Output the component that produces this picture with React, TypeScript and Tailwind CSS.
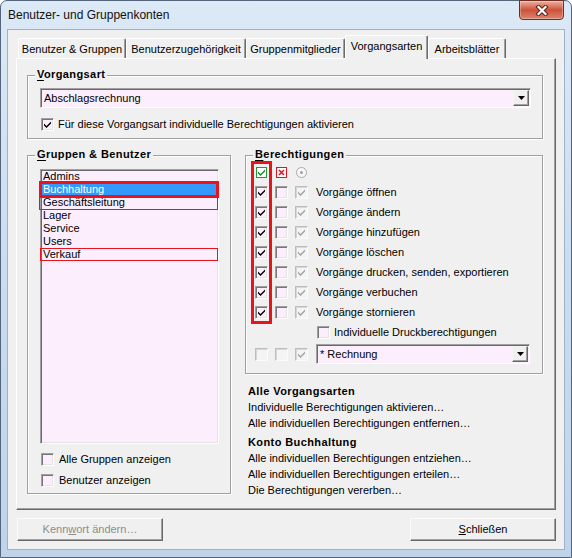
import React from "react";

const FONT = "font-['Liberation_Sans',Arial,sans-serif]";

function Check({ color = "#000" }: { color?: string }) {
  return (
    <svg width="7" height="7" viewBox="0 0 7 7" className="block">
      <polygon points="0,2.5 2.5,5 7,0.5 7,2.5 2.5,7 0,4.5" fill={color} />
    </svg>
  );
}

type Kind = "pink" | "disabled";

function Box({ checked = false, kind = "pink" }: { checked?: boolean; kind?: Kind }) {
  const cls =
    kind === "pink"
      ? "bg-[#fdeefd] border-t-[#a0a0a0] border-l-[#a0a0a0] border-r-white border-b-white shadow-[inset_1px_1px_0_#767676,inset_-1px_-1px_0_#e3e3e3]"
      : "bg-[#f4f4f4] border-t-[#bdbdbd] border-l-[#bdbdbd] border-r-[#fbfbfb] border-b-[#fbfbfb] shadow-[inset_1px_1px_0_#d6d6d6]";
  return (
    <div className={`w-[13px] h-[13px] shrink-0 border flex items-center justify-center ${cls}`}>
      {checked && <Check color={kind === "pink" ? "#000" : "#a3a3a3"} />}
    </div>
  );
}

function DropButton() {
  return (
    <div className="w-[16px] h-[16px] mr-px shrink-0 bg-[#f0f0f0] border border-t-[#f4f4f4] border-l-[#f4f4f4] border-r-[#696969] border-b-[#696969] shadow-[inset_-1px_-1px_0_#a0a0a0] flex items-center justify-center">
      <svg width="7" height="4" viewBox="0 0 7 4" className="block">
        <polygon points="0,0 7,0 3.5,4" fill="#000" />
      </svg>
    </div>
  );
}

function Combo({ text, className }: { text: string; className: string }) {
  return (
    <div
      className={`flex items-center border border-t-[#a0a0a0] border-l-[#a0a0a0] border-r-white border-b-white shadow-[inset_1px_1px_0_#696969] bg-[#fdeefd] ${className}`}
    >
      <div className="flex-1 pl-[3px] whitespace-nowrap">{text}</div>
      <DropButton />
    </div>
  );
}

function Group({
  title,
  className,
  children,
}: {
  title: string;
  className: string;
  children?: React.ReactNode;
}) {
  return (
    <div
      className={`relative border border-[#a0a0a0] shadow-[inset_1px_1px_0_#ffffff,1px_1px_0_#ffffff] ${className}`}
    >
      <div className="absolute -top-[8px] left-[7px] px-[2px] bg-[#f0f0f0] font-bold tracking-[0.4px] whitespace-nowrap">
        <span className="underline underline-offset-[2px]">{title[0]}</span>
        {title.slice(1)}
      </div>
      {children}
    </div>
  );
}

function Button({ children, disabled = false }: { children: React.ReactNode; disabled?: boolean }) {
  return (
    <div
      className={`w-[146px] h-[23px] flex items-center justify-center border border-t-[#fbfbfb] border-l-[#fbfbfb] border-r-[#696969] border-b-[#696969] shadow-[inset_-1px_-1px_0_#a0a0a0] ${
        disabled ? "text-[#8d8d8d]" : "text-black"
      }`}
    >
      {children}
    </div>
  );
}

const tabs = [
  { label: "Benutzer & Gruppen", w: "w-[108px]", sel: false },
  { label: "Benutzerzugehörigkeit", w: "w-[120px]", sel: false },
  { label: "Gruppenmitglieder", w: "w-[99px]", sel: false },
  { label: "Vorgangsarten", w: "w-[83px]", sel: true },
  { label: "Arbeitsblätter", w: "w-[78px]", sel: false },
];

const listItems = ["Admins", "Buchhaltung", "Geschäftsleitung", "Lager", "Service", "Users", "Verkauf"];

const perms = [
  "Vorgänge öffnen",
  "Vorgänge ändern",
  "Vorgänge hinzufügen",
  "Vorgänge löschen",
  "Vorgänge drucken, senden, exportieren",
  "Vorgänge verbuchen",
  "Vorgänge stornieren",
];

function ListItem({ name }: { name: string }) {
  const selected = name === "Buchhaltung";
  return (
    <div
      className={`relative h-[13px] pl-px whitespace-nowrap ${
        selected ? "bg-[#3399ff] text-white" : "text-black"
      }`}
    >
      {name}
      {selected && (
        <div className="absolute -left-[3px] -right-[3px] -top-[2px] -bottom-[2px] border-[3px] border-[#e8131b]" />
      )}
      {name === "Geschäftsleitung" && (
        <div className="absolute -left-[3px] -right-[2px] top-0 -bottom-[1px] border border-[#e8131b]" />
      )}
      {name === "Verkauf" && (
        <div className="absolute -left-[2px] -right-[2px] top-0 bottom-0 border border-[#e8131b]" />
      )}
    </div>
  );
}

export default function App() {
  return (
    <div className={`w-[572px] h-[558px] bg-white ${FONT} text-[11px] leading-[13px] text-black`}>
      <div className="w-full h-full rounded-t-[7px] border border-[#55667c] bg-linear-to-b from-[#dce9f6] via-[#c9dcf0] to-[#bfd4eb] flex flex-col">
        {/* Title bar */}
        <div className="h-[28px] flex items-start justify-between">
          <div className="pl-[7px] h-full flex items-center text-[12px] text-[#111]">
            Benutzer- und Gruppenkonten
          </div>
          <div className="-mt-px mr-[7px] w-[45px] h-[20px] rounded-b-[4px] border border-[#6e2d22] bg-linear-to-b from-[#eab0a2] via-[#cc5138] to-[#dc846f] shadow-[inset_0_0_0_1px_rgba(255,255,255,0.3)] flex items-center justify-center">
            <svg width="14" height="11" viewBox="0 0 14 11" className="block">
              <path d="M3.5 2 L10.5 9 M10.5 2 L3.5 9" stroke="#5a2318" strokeWidth="4.2" strokeLinecap="square" />
              <path d="M3.5 2 L10.5 9 M10.5 2 L3.5 9" stroke="#ffffff" strokeWidth="2.2" strokeLinecap="square" />
            </svg>
          </div>
        </div>

        {/* Client area */}
        <div className="mx-[6px] h-[521px] border border-[#9db2ca] bg-[#f0f0f0] flex flex-col">
          {/* Tabs */}
          <div className="mt-[5px] ml-[10px] h-[23px] flex items-end">
            {tabs.map((t) =>
              t.sel ? (
                <div
                  key={t.label}
                  className={`${t.w} h-[24px] -mb-px relative z-10 bg-[#f0f0f0] rounded-t-[2px] border-t border-l border-r border-t-white border-l-white border-r-[#696969] shadow-[inset_-1px_0_0_#a0a0a0] flex items-center justify-center whitespace-nowrap pb-[2px]`}
                >
                  {t.label}
                </div>
              ) : (
                <div
                  key={t.label}
                  className={`${t.w} h-[20px] rounded-t-[2px] border-t border-l border-r border-t-white border-l-white border-r-[#696969] shadow-[inset_-1px_0_0_#a0a0a0] flex items-center justify-center whitespace-nowrap pt-px`}
                >
                  {t.label}
                </div>
              )
            )}
          </div>

          {/* Tab panel */}
          <div className="ml-[8px] w-[540px] h-[452px] border border-t-white border-l-white border-r-[#696969] border-b-[#696969] shadow-[inset_-1px_-1px_0_#a0a0a0] flex flex-col">
            <Group title="Vorgangsart" className="ml-[10px] mt-[16px] w-[516px] h-[64px] flex flex-col">
              <Combo text="Abschlagsrechnung" className="ml-[12px] mt-[12px] w-[491px] h-[20px]" />
              <div className="mt-[10px] ml-[13px] flex items-center gap-[4px]">
                <Box checked />
                <span className="whitespace-nowrap">Für diese Vorgangsart individuelle Berechtigungen aktivieren</span>
              </div>
            </Group>

            <div className="mt-[16px] ml-[10px] flex items-start">
              <Group title="Gruppen & Benutzer" className="w-[204px] h-[339px] flex flex-col">
                <div className="ml-[12px] mt-[13px] w-[179px] h-[275px] border border-t-[#a0a0a0] border-l-[#a0a0a0] border-r-white border-b-white shadow-[inset_1px_1px_0_#696969,inset_-1px_-1px_0_#e3e3e3] bg-[#fdeefd] pl-px pr-[2px] flex flex-col">
                  {listItems.map((n) => (
                    <ListItem key={n} name={n} />
                  ))}
                </div>
                <div className="mt-[9px] ml-[13px] flex items-center gap-[5px]">
                  <Box />
                  <span>Alle Gruppen anzeigen</span>
                </div>
                <div className="mt-[8px] ml-[13px] flex items-center gap-[5px]">
                  <Box />
                  <span>Benutzer anzeigen</span>
                </div>
              </Group>

              <div className="ml-[14px] w-[298px] flex flex-col">
                <Group title="Berechtigungen" className="h-[219px] flex flex-col">
                  <div className="mt-[6px] ml-[9px] flex flex-col">
                    {/* Header icons */}
                    <div className="h-[20px] flex items-center gap-[7px]">
                      <div className="w-[13px] flex justify-center">
                        <div className="w-[11px] h-[11px] border border-[#1f9a36] bg-white flex items-center justify-center">
                          <Check color="#178a2a" />
                        </div>
                      </div>
                      <div className="w-[13px] flex justify-center">
                        <div className="w-[11px] h-[11px] border border-[#e3141c] bg-white flex items-center justify-center">
                          <svg width="7" height="7" viewBox="0 0 7 7" className="block">
                            <path d="M1 1 L6 6 M6 1 L1 6" stroke="#e3141c" strokeWidth="1.6" />
                          </svg>
                        </div>
                      </div>
                      <div className="w-[13px] flex justify-center">
                        <div className="w-[11px] h-[11px] rounded-full border border-[#a8a8a8] bg-[#f8f8f8] flex items-center justify-center">
                          <div className="w-[3px] h-[3px] rounded-full bg-[#a0a0a0]" />
                        </div>
                      </div>
                    </div>
                    {perms.map((p) => (
                      <div key={p} className="h-[20px] flex items-center gap-[7px]">
                        <Box checked />
                        <Box />
                        <Box checked kind="disabled" />
                        <span className="ml-px whitespace-nowrap">{p}</span>
                      </div>
                    ))}
                    <div className="h-[20px] flex items-center gap-[4px] ml-[62px]">
                      <Box />
                      <span className="whitespace-nowrap">Individuelle Druckberechtigungen</span>
                    </div>
                    <div className="mt-[2px] h-[20px] flex items-center gap-[7px]">
                      <Box kind="disabled" />
                      <Box kind="disabled" />
                      <Box checked kind="disabled" />
                      <Combo text="* Rechnung" className="ml-px w-[214px] h-[20px]" />
                    </div>
                  </div>
                  <div className="absolute left-[5px] top-[5px] w-[21px] h-[163px] border-[3px] border-[#e8131b]" />
                </Group>

                <div className="pl-[3px] pt-[9px] flex flex-col leading-[16px] whitespace-nowrap">
                  <div className="font-bold tracking-[0.4px]">Alle Vorgangsarten</div>
                  <div>Individuelle Berechtigungen aktivieren…</div>
                  <div>Alle individuellen Berechtigungen entfernen…</div>
                  <div className="mt-[3px] font-bold tracking-[0.4px]">Konto Buchhaltung</div>
                  <div>Alle individuellen Berechtigungen entziehen…</div>
                  <div>Alle individuellen Berechtigungen erteilen…</div>
                  <div>Die Berechtigungen vererben…</div>
                </div>
              </div>
            </div>
          </div>

          {/* Buttons */}
          <div className="mt-[8px] pl-[9px] pr-[8px] flex justify-between">
            <Button disabled>
              <span>
                Kenn<span className="underline">w</span>ort ändern…
              </span>
            </Button>
            <Button>
              <span>
                <span className="underline">S</span>chließen
              </span>
            </Button>
          </div>
        </div>
      </div>
    </div>
  );
}
